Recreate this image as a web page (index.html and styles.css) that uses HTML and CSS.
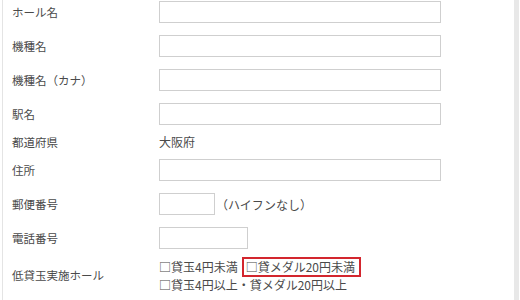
FILE: index.html
```html
<!DOCTYPE html>
<html lang="ja">

<head>
    <meta charset="UTF-8">
    <meta name="viewport" content="width=device-width, initial-scale=1.0">
    <title>ホール登録</title>
    <link rel="stylesheet" href="styles.css">
</head>

<body>
    <div class="panel">
        <div class="row">
            <div class="label">ホール名</div>
            <div class="field"><input type="text" class="txt"></div>
        </div>
        <div class="row">
            <div class="label">機種名</div>
            <div class="field"><input type="text" class="txt"></div>
        </div>
        <div class="row">
            <div class="label">機種名（カナ）</div>
            <div class="field"><input type="text" class="txt"></div>
        </div>
        <div class="row">
            <div class="label">駅名</div>
            <div class="field"><input type="text" class="txt"></div>
        </div>
        <div class="row static">
            <div class="label">都道府県</div>
            <div class="field">大阪府</div>
        </div>
        <div class="row">
            <div class="label">住所</div>
            <div class="field"><input type="text" class="txt"></div>
        </div>
        <div class="row">
            <div class="label">郵便番号</div>
            <div class="field"><input type="text" class="txt zip"><span class="note">（ハイフンなし）</span></div>
        </div>
        <div class="row">
            <div class="label">電話番号</div>
            <div class="field"><input type="text" class="txt tel"></div>
        </div>
        <div class="row checkrow">
            <div class="label">低貸玉実施ホール</div>
            <div class="field checks">
                <div class="line">
                    <span>□貸玉4円未満</span>
                    <span class="mark">□貸メダル20円未満</span>
                </div>
                <div class="line">
                    <span>□貸玉4円以上・貸メダル20円以上</span>
                </div>
            </div>
        </div>
    </div>
</body>

</html>
```

FILE: styles.css
```css
body {
    margin: 0;
    background: #fff;
    font-family: "Noto Sans CJK JP", "Noto Sans", sans-serif;
    font-size: 12px;
    color: #4a4a4a;
}

/* 外枠 */
.panel {
    margin: -5px 1px 0 2px;
    padding-left: 9px;
    border-left: 1px solid #e4e4e4;
    border-right: 5px solid #e8e8e8;
    height: 310px;
}

/* 1行 */
.row {
    display: grid;
    grid-template-columns: 147px 1fr;
    align-items: center;
    padding: 6px 0;
}

.row.static {
    padding: 3px 0;
    line-height: 16px;
}

.row.checkrow {
    padding: 2px 0;
}

.label {
    font-size: 11.5px;
    line-height: 16px;
}

.field {
    display: flex;
    align-items: center;
}

.txt {
    box-sizing: border-box;
    width: 282px;
    height: 22px;
    margin: 0;
    padding: 2px 4px;
    border: 1px solid #cfcfcf;
    background: #fff;
    font: inherit;
}

.txt.zip {
    width: 56px;
}

.txt.tel {
    width: 89px;
}

.note {
    margin-left: 1px;
}

/* チェック欄 */
.checks {
    display: block;
}

.line {
    line-height: 16px;
    display: flex;
    align-items: center;
    gap: 4px;
}

.mark {
    border: 2px solid #d3262e;
    padding: 0 4px 0 2px;
    line-height: 16px;
}
```
